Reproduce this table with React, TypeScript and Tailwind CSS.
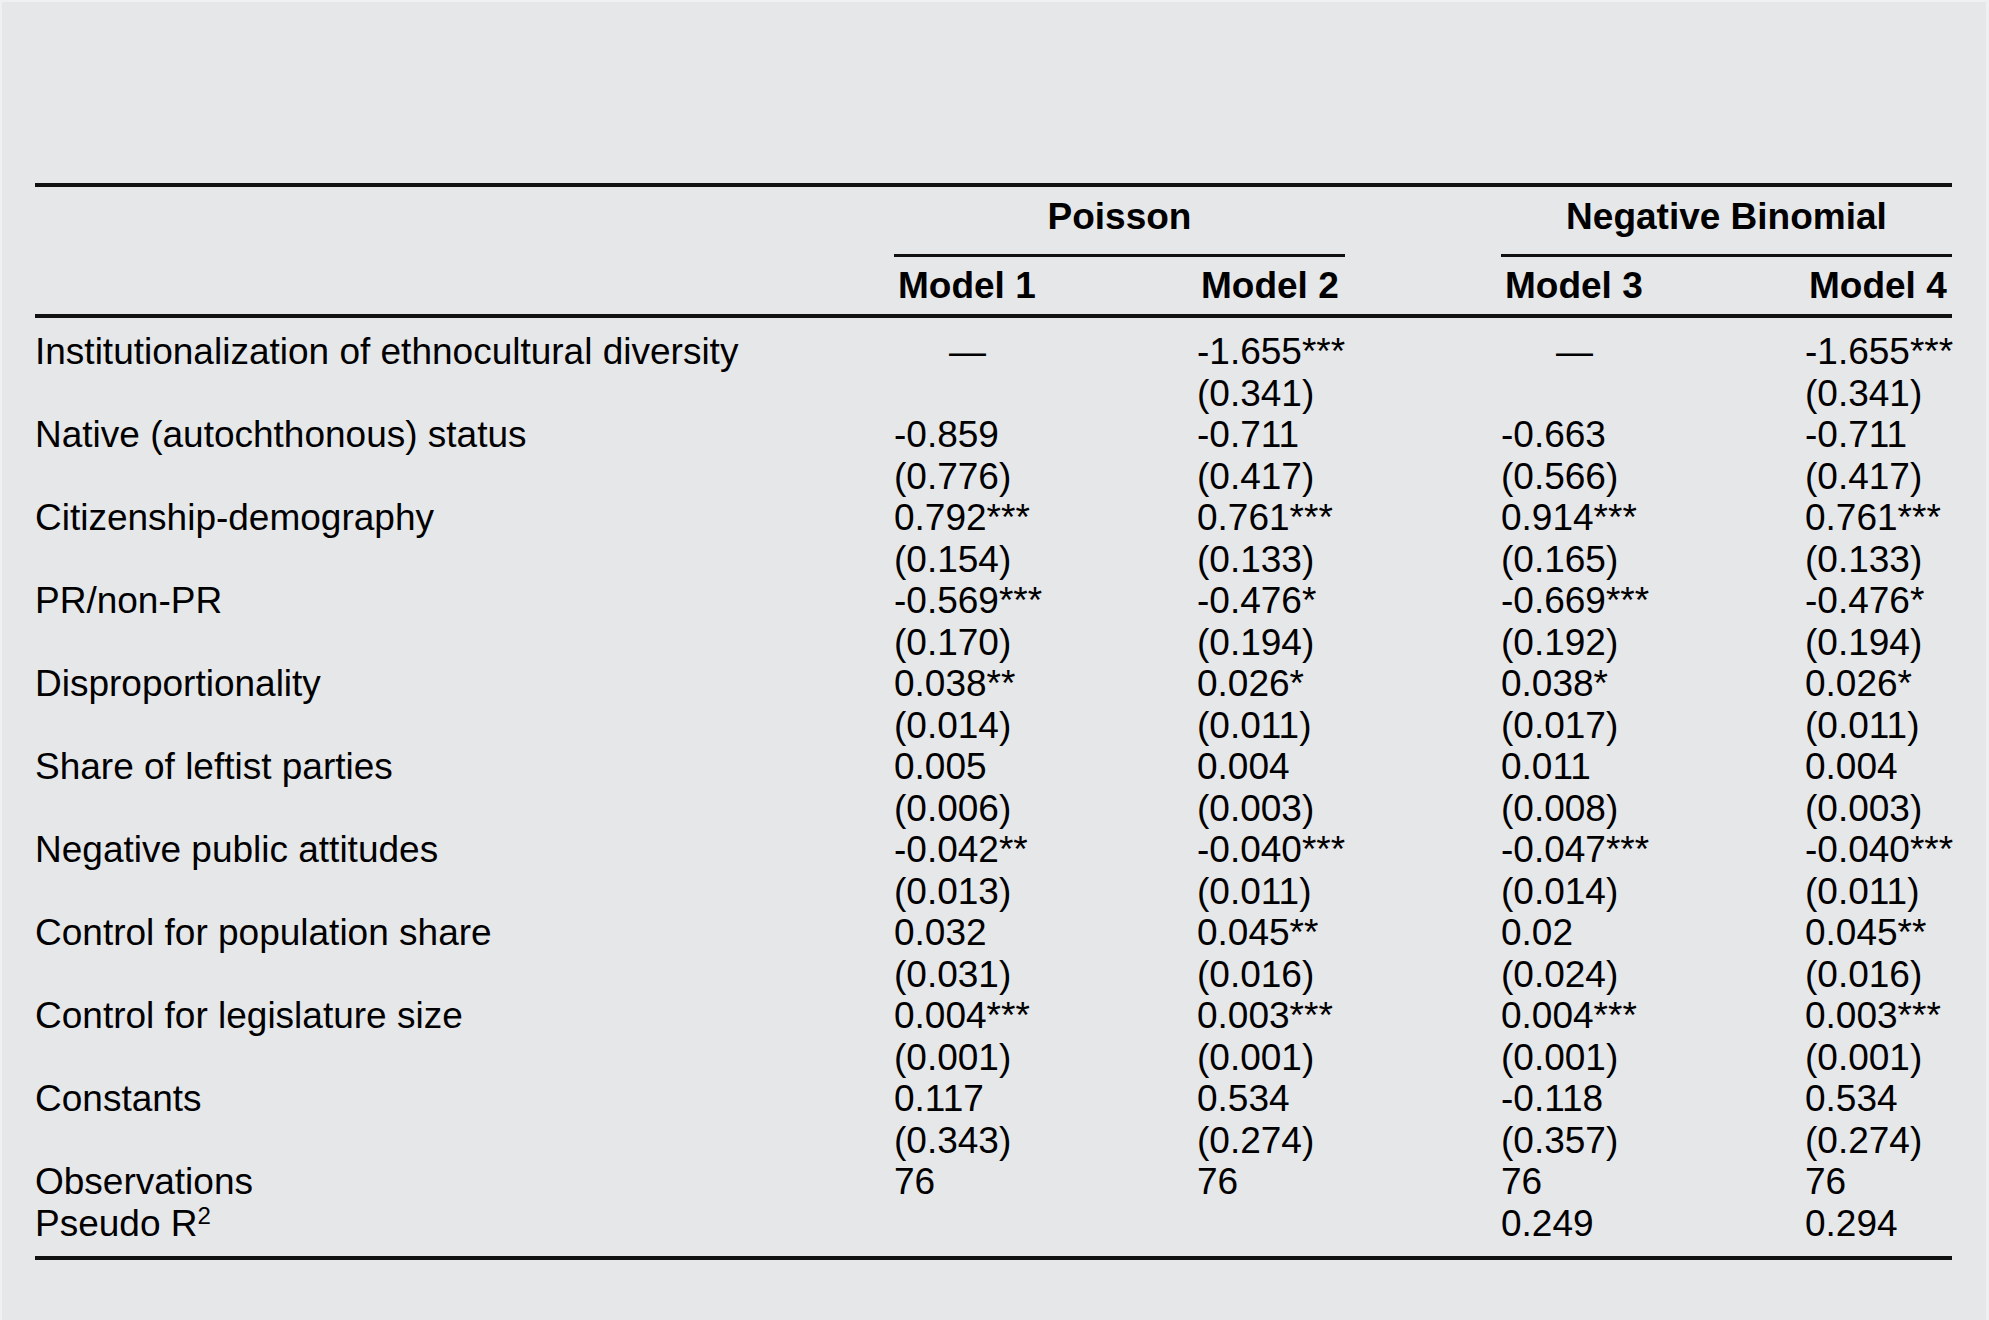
import React from "react";

type Row = { label: React.ReactNode; cells: string[] };

const rows: Row[] = [
  { label: "Institutionalization of ethnocultural diversity", cells: ["—", "-1.655***", "—", "-1.655***"] },
  { label: "", cells: ["", "(0.341)", "", "(0.341)"] },
  { label: "Native (autochthonous) status", cells: ["-0.859", "-0.711", "-0.663", "-0.711"] },
  { label: "", cells: ["(0.776)", "(0.417)", "(0.566)", "(0.417)"] },
  { label: "Citizenship-demography", cells: ["0.792***", "0.761***", "0.914***", "0.761***"] },
  { label: "", cells: ["(0.154)", "(0.133)", "(0.165)", "(0.133)"] },
  { label: "PR/non-PR", cells: ["-0.569***", "-0.476*", "-0.669***", "-0.476*"] },
  { label: "", cells: ["(0.170)", "(0.194)", "(0.192)", "(0.194)"] },
  { label: "Disproportionality", cells: ["0.038**", "0.026*", "0.038*", "0.026*"] },
  { label: "", cells: ["(0.014)", "(0.011)", "(0.017)", "(0.011)"] },
  { label: "Share of leftist parties", cells: ["0.005", "0.004", "0.011", "0.004"] },
  { label: "", cells: ["(0.006)", "(0.003)", "(0.008)", "(0.003)"] },
  { label: "Negative public attitudes", cells: ["-0.042**", "-0.040***", "-0.047***", "-0.040***"] },
  { label: "", cells: ["(0.013)", "(0.011)", "(0.014)", "(0.011)"] },
  { label: "Control for population share", cells: ["0.032", "0.045**", "0.02", "0.045**"] },
  { label: "", cells: ["(0.031)", "(0.016)", "(0.024)", "(0.016)"] },
  { label: "Control for legislature size", cells: ["0.004***", "0.003***", "0.004***", "0.003***"] },
  { label: "", cells: ["(0.001)", "(0.001)", "(0.001)", "(0.001)"] },
  { label: "Constants", cells: ["0.117", "0.534", "-0.118", "0.534"] },
  { label: "", cells: ["(0.343)", "(0.274)", "(0.357)", "(0.274)"] },
  { label: "Observations", cells: ["76", "76", "76", "76"] },
  {
    label: (
      <>
        Pseudo R<sup className="relative top-[1px] align-top text-[24px] leading-none">2</sup>
      </>
    ),
    cells: ["", "", "0.249", "0.294"],
  },
];

const grid = "grid grid-cols-[859px_303px_304px_304px_147px]";

export default function App() {
  return (
    <div
      className="w-[1989px] h-[1320px] bg-[#e6e7e9] border-t-2 border-l-2 border-r-[3px] border-[#eff0f1] pl-[33px] pt-[181px] text-black text-[37px] leading-[41.5px] overflow-hidden"
      style={{ fontFamily: '"Liberation Sans", Arial, Helvetica, sans-serif' }}
    >
      <div className="w-[1917px]">
        {/* top rule */}
        <div className="h-[4px] bg-[#111]" />

        {/* group headers */}
        <div className={grid}>
          <div />
          <div className="col-span-2">
            <div className="w-[451px] pt-[9px] pb-[16px] border-b-[3px] border-[#111] text-center font-bold">
              Poisson
            </div>
          </div>
          <div className="col-span-2">
            <div className="w-[451px] pt-[9px] pb-[16px] border-b-[3px] border-[#111] text-center font-bold">
              Negative Binomial
            </div>
          </div>
        </div>

        {/* model headers */}
        <div className={`${grid} pt-[8px] pb-[8px] font-bold`}>
          <div />
          <div className="pl-[4px] whitespace-nowrap">Model 1</div>
          <div className="pl-[4px] whitespace-nowrap">Model 2</div>
          <div className="pl-[4px] whitespace-nowrap">Model 3</div>
          <div className="pl-[4px] whitespace-nowrap">Model 4</div>
        </div>

        <div className="h-[4px] bg-[#111]" />

        {/* body */}
        <div className="pt-[13px] pb-[12px]">
          {rows.map((r, i) => (
            <div key={i} className={`${grid} h-[41.5px]`}>
              <div className="whitespace-nowrap">{r.label}</div>
              {r.cells.map((c, j) => (
                <div key={j} className="whitespace-nowrap">
                  {c === "—" ? <span className="inline-block w-[147px] text-center">—</span> : c}
                </div>
              ))}
            </div>
          ))}
        </div>

        <div className="h-[4px] bg-[#111]" />
      </div>
    </div>
  );
}
